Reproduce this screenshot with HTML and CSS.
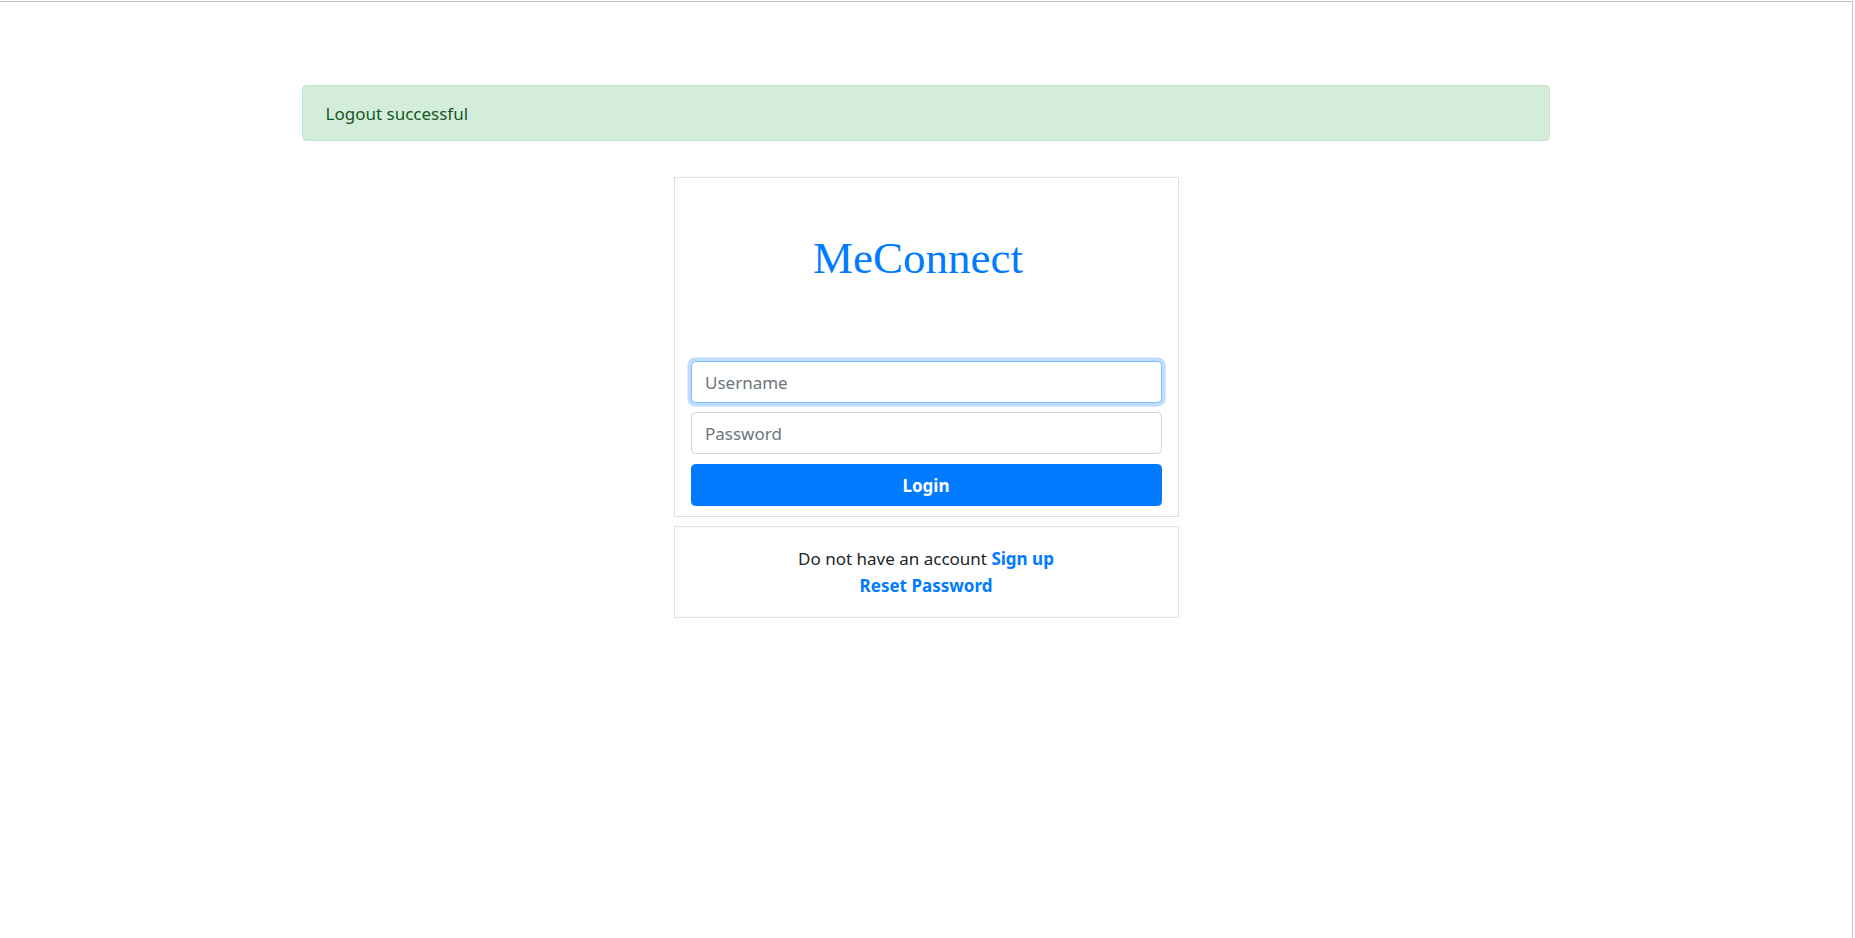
FILE: index.html
```html
<!DOCTYPE html>
<html lang="en">
<head>
<meta charset="utf-8">
<title>MeConnect - Login</title>
<link rel="stylesheet" href="styles.css">
</head>
<body>
<div class="frame">
  <div class="container">
    <div class="alert">Logout successful</div>
  </div>
  <div class="auth">
    <div class="card card-login">
      <div class="logo"><h1 class="brand">MeConnect</h1></div>
      <form class="form">
        <input class="field field-focus" type="text" placeholder="Username">
        <input class="field" type="password" placeholder="Password">
        <button class="btn" type="button">Login</button>
      </form>
    </div>
    <div class="card card-links">
      <div>Do not have an account <a class="link" href="#">Sign up</a></div>
      <div><a class="link" href="#">Reset Password</a></div>
    </div>
  </div>
</div>
</body>
</html>
```

FILE: styles.css
```css
html, body {
  margin: 0;
  padding: 0;
  background: #ffffff;
}
body {
  font-family: "Noto Sans", "Open Sans", sans-serif;
  font-size: 17px;
  line-height: 27px;
  color: #212529;
}
.frame {
  margin-top: 1px;
  width: 1852px;
  height: 936px;
  border-top: 1px solid #c4c4c4;
  border-right: 1px solid #c4c4c4;
  box-sizing: content-box;
}
.container {
  width: 1248px;
  margin: 0 auto;
  padding-top: 83px;
}
.alert {
  height: 56px;
  box-sizing: border-box;
  padding: 13.5px 22.5px;
  background: #d4edda;
  border: 1px solid #c3e6cb;
  border-radius: 4.5px;
  color: #155724;
}
.auth {
  width: 505px;
  margin: 36px auto 0;
  display: flex;
  flex-direction: column;
  gap: 9px;
}
.card {
  border: 1px solid #dedfe2;
  background: #fff;
  box-sizing: border-box;
}
.card-login {
  padding: 0 16px 10px;
}
.logo {
  padding: 53px 16px 76px 0;
  text-align: center;
}
.brand {
  margin: 0;
  font-family: "Liberation Serif", "Times New Roman", serif;
  font-size: 45px;
  line-height: 54px;
  font-weight: normal;
  color: #007bff;
}
.form {
  display: flex;
  flex-direction: column;
  margin: 0;
}
.field {
  height: 42px;
  box-sizing: border-box;
  padding: 6.75px 13.5px;
  border: 1px solid #ced4da;
  border-radius: 4.5px;
  font-family: inherit;
  font-size: 17px;
  color: #495057;
  background: #fff;
  outline: none;
  margin: 0 0 9px;
}
.field + .field {
  margin-bottom: 10px;
}
.field::placeholder {
  color: #6c757d;
}
.field-focus {
  border-color: #80bdff;
  box-shadow: 0 0 0 3.6px rgba(0, 123, 255, 0.25);
}
.btn {
  height: 42px;
  border: 1px solid #007bff;
  border-radius: 4.5px;
  background: #007bff;
  color: #fff;
  font-family: inherit;
  font-size: 17px;
  font-weight: bold;
  padding: 0;
}
.card-links {
  padding: 18px 16px;
  text-align: center;
}
.link {
  color: #007bff;
  font-weight: bold;
  text-decoration: none;
}
```
